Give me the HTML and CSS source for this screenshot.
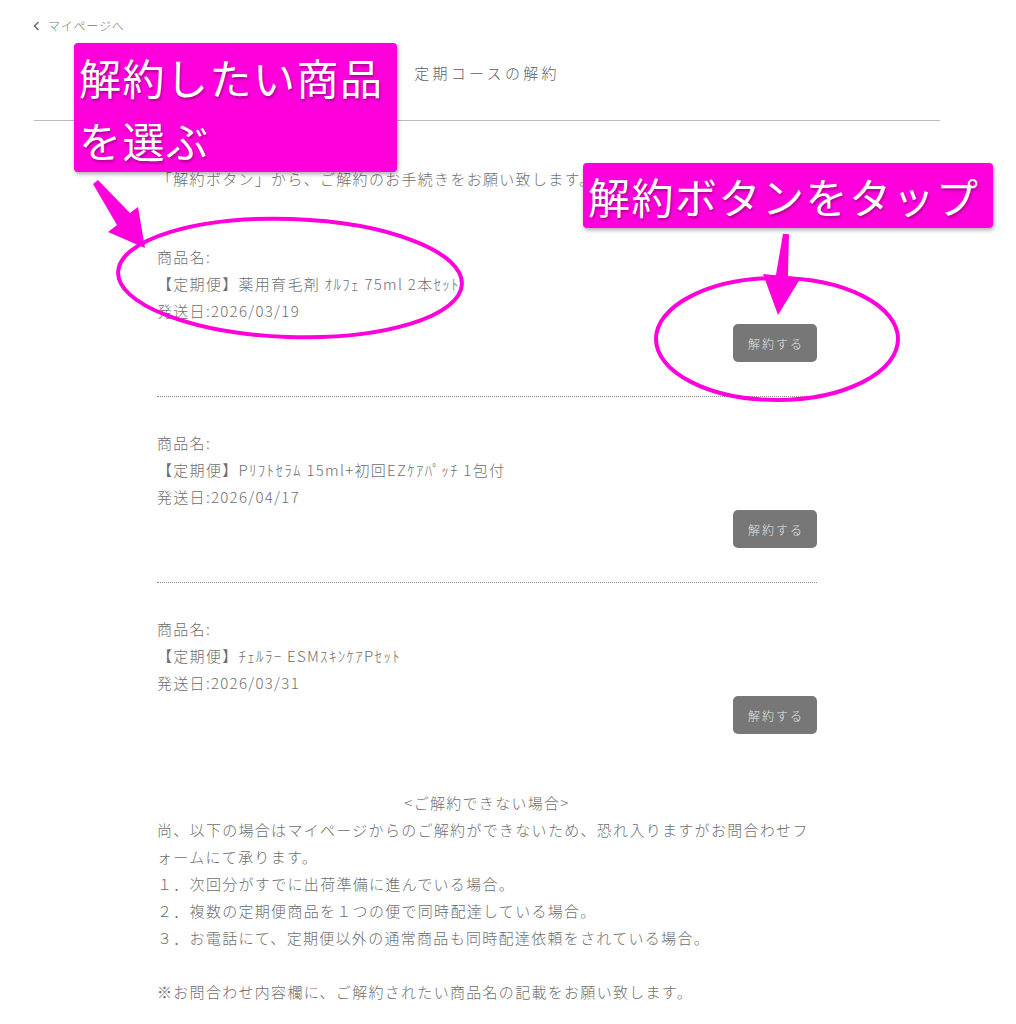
FILE: index.html
```html
<!DOCTYPE html>
<html lang="ja">
<head>
<meta charset="utf-8">
<title>定期コースの解約</title>
<link rel="stylesheet" href="styles.css">
</head>
<body>
<div class="page">
  <a class="back" href="#"><svg class="chev" width="7" height="10" viewBox="0 0 7 10"><polyline points="5.5,1 1.5,5 5.5,9" fill="none" stroke="#6f6f6f" stroke-width="1.6"/></svg>マイページへ</a>
  <div class="wrap">
    <h1 class="title">定期コースの解約</h1>
    <div class="content">
      <p class="intro">「解約ボタン」から、ご解約のお手続きをお願い致します。</p>
      <ul class="items">
        <li class="item">
          <p>商品名:</p>
          <p>【定期便】薬用育毛剤 ｵﾙﾌｪ 75ml 2本ｾｯﾄ</p>
          <p>発送日:2026/03/19</p>
          <div class="actions"><button class="cancel">解約する</button></div>
        </li>
        <li class="item">
          <p>商品名:</p>
          <p>【定期便】Pﾘﾌﾄｾﾗﾑ 15ml+初回EZｹｱﾊﾟｯﾁ 1包付</p>
          <p>発送日:2026/04/17</p>
          <div class="actions"><button class="cancel">解約する</button></div>
        </li>
        <li class="item">
          <p>商品名:</p>
          <p>【定期便】ﾁｪﾙﾗｰ ESMｽｷﾝｹｱPｾｯﾄ</p>
          <p>発送日:2026/03/31</p>
          <div class="actions"><button class="cancel">解約する</button></div>
        </li>
      </ul>
      <section class="notice">
        <h2 class="notice-title">&lt;ご解約できない場合&gt;</h2>
        <p>尚、以下の場合はマイページからのご解約ができないため、恐れ入りますがお問合わせフォームにて承ります。</p>
        <p>１．次回分がすでに出荷準備に進んでいる場合。</p>
        <p>２．複数の定期便商品を１つの便で同時配達している場合。</p>
        <p>３．お電話にて、定期便以外の通常商品も同時配達依頼をされている場合。</p>
        <p class="spacer">&nbsp;</p>
        <p>※お問合わせ内容欄に、ご解約されたい商品名の記載をお願い致します。</p>
      </section>
    </div>
  </div>

  <svg class="marks" width="1016" height="1024" viewBox="0 0 1016 1024">
    <ellipse cx="290" cy="278" rx="172" ry="59" transform="rotate(2 290 278)" fill="none" stroke="#ff00dd" stroke-width="4"/>
    <ellipse cx="777" cy="339" rx="121" ry="61" fill="none" stroke="#ff00dd" stroke-width="4"/>
    <polygon points="98,180 130,213 138,207 145,248 108,232 117,225 93,184" fill="#ff00dd"/>
    <polygon points="789,234.3 787.9,276.4 800.8,277.7 778,315 763,273.9 775.9,275.2 783,233.7" fill="#ff00dd"/>
  </svg>
  <div class="callout callout-select">解約したい商品<br>を選ぶ</div>
  <div class="callout callout-tap">解約ボタンをタップ</div>
</div>
</body>
</html>
```

FILE: styles.css
```css
html, body {
  margin: 0;
  padding: 0;
  background: #fff;
}

body {
  font-family: "Noto Sans CJK JP", "Noto Sans", sans-serif;
  color: #6e6e6e;
}

.page {
  position: relative;
  width: 1016px;
  min-height: 1024px;
}

.back {
  display: flex;
  align-items: center;
  gap: 8px;
  padding: 18px 0 0 33px;
  height: 16px;
  font-size: 12px;
  line-height: 16px;
  letter-spacing: 0.8px;
  font-weight: 300;
  color: #777;
  text-decoration: none;
}

.wrap {
  width: 906px;
  margin-left: 34px;
}

.title {
  margin: 0;
  padding: 28px 0 36px;
  font-size: 15px;
  line-height: 22px;
  font-weight: 300;
  letter-spacing: 3.3px;
  color: #5e5e5e;
  text-align: center;
  border-bottom: 1px solid #bbb;
}

.content {
  width: 660px;
  margin: 0 auto;
  font-size: 15px;
  line-height: 27px;
  letter-spacing: 1.3px;
  font-weight: 300;
}

.content p {
  margin: 0;
}

.intro {
  margin-top: 44px !important;
}

.items {
  list-style: none;
  margin: 51px 0 0;
  padding: 0;
}

.item {
  padding: 32px 0 34px;
  border-bottom: 1px dotted #8a8a8a;
}

.item:first-child {
  padding-top: 0;
}

.item:last-child {
  border-bottom: none;
}

.actions {
  display: flex;
  justify-content: flex-end;
}

.cancel {
  width: 84px;
  height: 38px;
  border: none;
  border-radius: 5px;
  background: #777;
  color: #e2e2e2;
  font-family: inherit;
  font-size: 12px;
  font-weight: 300;
  letter-spacing: 2px;
  padding: 0 0 0 2px;
}

.notice {
  margin-top: 21px;
}

.notice-title {
  margin: 0;
  font-size: 15px;
  line-height: 27px;
  font-weight: 300;
  text-align: center;
}

.marks {
  position: absolute;
  top: 0;
  left: 0;
  pointer-events: none;
}

.callout {
  position: absolute;
  box-sizing: border-box;
  background: #ff00dd;
  color: #fff;
  border-radius: 4px;
  box-shadow: 1px 2px 4px rgba(0, 0, 0, 0.35);
  font-family: "Noto Sans CJK JP", sans-serif;
  font-size: 42px;
  letter-spacing: 1.5px;
  text-shadow: 1px 2px 3px rgba(0, 0, 0, 0.35);
  white-space: nowrap;
}

.callout-select {
  left: 74px;
  top: 43px;
  width: 323px;
  height: 129px;
  padding: 2px 0 0 5px;
  line-height: 63px;
}

.callout-tap {
  left: 583px;
  top: 163px;
  width: 410px;
  height: 65px;
  padding: 0 0 0 5px;
  line-height: 65px;
}
```
